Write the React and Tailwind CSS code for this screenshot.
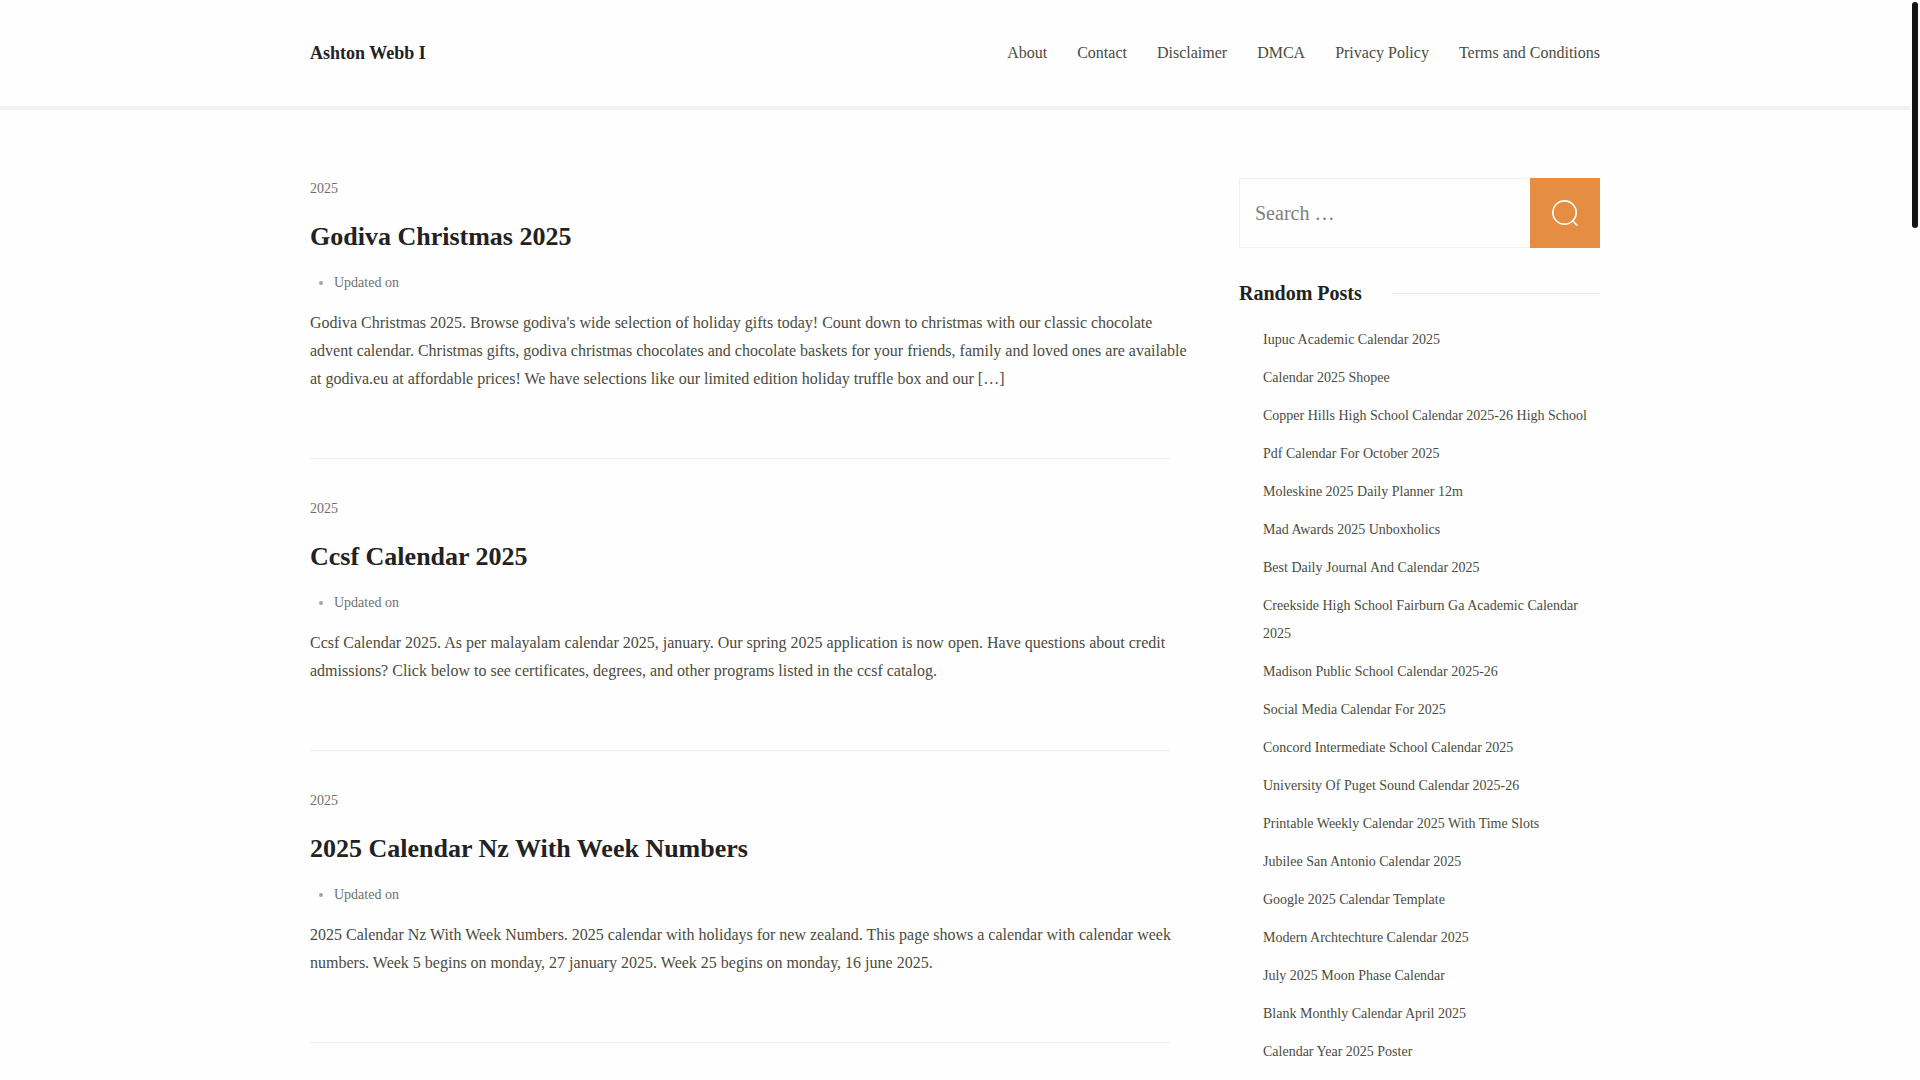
const nav = ['About', 'Contact', 'Disclaimer', 'DMCA', 'Privacy Policy', 'Terms and Conditions'];

const articles = [
  {
    title: 'Godiva Christmas 2025',
    text: "Godiva Christmas 2025. Browse godiva's wide selection of holiday gifts today! Count down to christmas with our classic chocolate advent calendar. Christmas gifts, godiva christmas chocolates and chocolate baskets for your friends, family and loved ones are available at godiva.eu at affordable prices! We have selections like our limited edition holiday truffle box and our […]",
  },
  {
    title: 'Ccsf Calendar 2025',
    text: 'Ccsf Calendar 2025. As per malayalam calendar 2025, january. Our spring 2025 application is now open. Have questions about credit admissions? Click below to see certificates, degrees, and other programs listed in the ccsf catalog.',
  },
  {
    title: '2025 Calendar Nz With Week Numbers',
    text: '2025 Calendar Nz With Week Numbers. 2025 calendar with holidays for new zealand. This page shows a calendar with calendar week numbers. Week 5 begins on monday, 27 january 2025. Week 25 begins on monday, 16 june 2025.',
  },
];

const posts = [
  'Iupuc Academic Calendar 2025',
  'Calendar 2025 Shopee',
  'Copper Hills High School Calendar 2025-26 High School',
  'Pdf Calendar For October 2025',
  'Moleskine 2025 Daily Planner 12m',
  'Mad Awards 2025 Unboxholics',
  'Best Daily Journal And Calendar 2025',
  'Creekside High School Fairburn Ga Academic Calendar 2025',
  'Madison Public School Calendar 2025-26',
  'Social Media Calendar For 2025',
  'Concord Intermediate School Calendar 2025',
  'University Of Puget Sound Calendar 2025-26',
  'Printable Weekly Calendar 2025 With Time Slots',
  'Jubilee San Antonio Calendar 2025',
  'Google 2025 Calendar Template',
  'Modern Archtechture Calendar 2025',
  'July 2025 Moon Phase Calendar',
  'Blank Monthly Calendar April 2025',
  'Calendar Year 2025 Poster',
];

function Header() {
  return (
    <header className="border-b-4 border-[#f1f1ef]">
      <div className="mx-auto flex max-w-[1290px] items-center justify-between py-[39px]">
        <a href="#" className="text-lg font-bold text-[#222222]">Ashton Webb I</a>
        <nav className="flex gap-[30px] text-base leading-7">
          {nav.map((item) => (
            <a key={item} href="#">{item}</a>
          ))}
        </nav>
      </div>
    </header>
  );
}

function Article({ title, text }) {
  return (
    <article className="mb-9 border-b border-[#f1f1ef] pb-[65px]">
      <a href="#" className="block text-sm leading-7 text-[#70706a]">2025</a>
      <h2 className="mt-3.5 text-[26px] leading-10 font-bold text-[#222222]">
        <a href="#">{title}</a>
      </h2>
      <ul className="mt-3 list-disc pl-6 text-sm leading-7 text-[#70706a] marker:text-[#a3a39b]">
        <li>Updated on</li>
      </ul>
      <p className="mt-3 -mr-5 text-base leading-7">{text}</p>
    </article>
  );
}

function Sidebar() {
  return (
    <aside className="mt-[3px] w-[361px] shrink-0">
      <form className="flex h-[70px]" onSubmit={(e) => e.preventDefault()}>
        <input
          type="search"
          aria-label="Search"
          placeholder="Search …"
          className="min-w-0 flex-1 border border-r-0 border-[#f1f1ef] px-[15px] text-xl outline-none placeholder:text-[#808080]"
        />
        <button type="submit" aria-label="Search" className="flex w-[70px] items-center justify-center bg-[#e58e43] text-white">
          <svg width="26" height="26" viewBox="0 0 26 26" fill="none" stroke="currentColor" strokeWidth="1.7" aria-hidden="true">
            <circle cx="12.5" cy="12.5" r="11.7" />
            <path d="M20.5 20.5L25.3 25.6" />
          </svg>
        </button>
      </form>
      <h2 className="mt-[30px] flex items-center gap-[30px] text-xl leading-[30px] font-bold text-[#222222] after:h-px after:flex-1 after:bg-[#e8e8e6]">
        Random Posts
      </h2>
      <ul className="mt-[18px] flex flex-col gap-[10px] pl-6 text-sm leading-7">
        {posts.map((post) => (
          <li key={post}><a href="#">{post}</a></li>
        ))}
      </ul>
    </aside>
  );
}

export default function App() {
  return (
    <div className="flex h-screen overflow-hidden bg-[#fefefe] font-['Liberation_Serif',serif] text-[#4b4b40]">
      <div className="min-w-0 flex-1">
        <Header />
        <main className="mx-auto flex max-w-[1290px] items-start justify-between gap-[69px] pt-[65px]">
          <div className="min-w-0 flex-1">
            {articles.map((article) => (
              <Article key={article.title} {...article} />
            ))}
          </div>
          <Sidebar />
        </main>
      </div>
      <div className="w-2.5 shrink-0 px-0.5 pt-0.5" aria-hidden="true">
        <div className="h-[226px] rounded-full bg-[#141414]" />
      </div>
    </div>
  );
}
